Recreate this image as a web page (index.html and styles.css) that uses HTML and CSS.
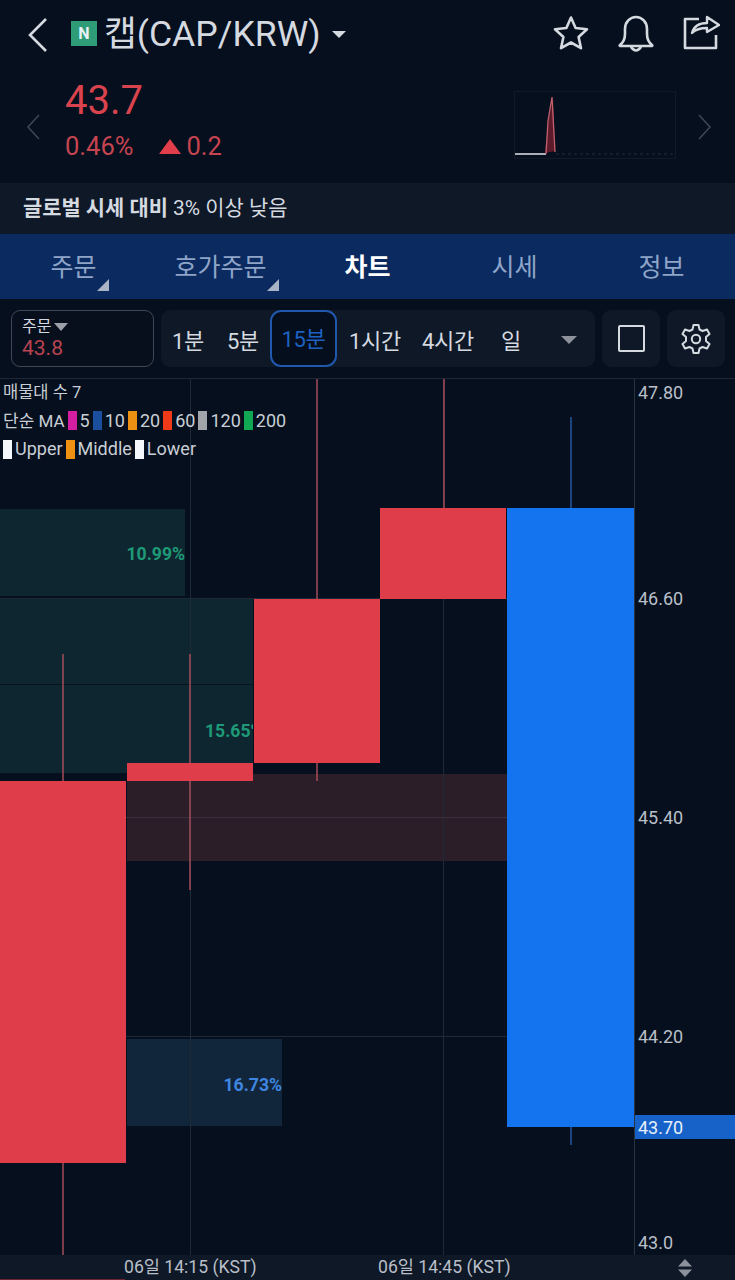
FILE: index.html
```html
<!DOCTYPE html>
<html lang="ko">
<head>
<meta charset="utf-8">
<title>캡(CAP/KRW)</title>
<link rel="stylesheet" href="styles.css">
</head>
<body>
<div class="app">
  <header class="topbar">
    <svg class="back" width="24" height="36" viewBox="0 0 24 36"><path d="M20 2 L4 18 L20 34" fill="none" stroke="#d5d9e0" stroke-width="2.6"/></svg>
    <span class="nbadge">N</span>
    <span class="coin">캡(CAP/KRW)</span>
    <span class="caret"></span>
    <span class="spacer"></span>
    <svg class="ico" width="38" height="38" viewBox="0 0 38 38"><path d="M19 3.5 L23.6 14 L35 15.2 L26.6 23 L29 34.2 L19 28.5 L9 34.2 L11.400 23 L3 15.2 L14.400 14 Z" fill="none" stroke="#d5d9e0" stroke-width="2.6" stroke-linejoin="round"/></svg>
    <svg class="ico" width="38" height="38" viewBox="0 0 38 38"><path d="M3 31 Q8 27 8 20 V15 C8 8 13 3 19 3 C25 3 30 8 30 15 V20 Q30 27 35 31 Q36 32 34 32 H4 Q2 32 3 31 Z M14 33 Q19 40 24 33" fill="none" stroke="#d5d9e0" stroke-width="2.6" stroke-linejoin="round"/></svg>
    <svg class="ico" width="38" height="38" viewBox="0 0 38 38"><path d="M17 5 H3 V34 H34 V21" fill="none" stroke="#d5d9e0" stroke-width="2.6" stroke-linejoin="round"/><path d="M10 19 C12 12 18 9 25 9 V3 L37 11 L25 18 V14 C18 14 14 15 10 19 Z" fill="none" stroke="#d5d9e0" stroke-width="2.4" stroke-linejoin="round"/></svg>
  </header>

  <section class="price">
    <svg class="side" width="14" height="26" viewBox="0 0 14 26"><path d="M13 1 L2 13 L13 25" fill="none" stroke="#3c4755" stroke-width="1.6"/></svg>
    <div class="price-text">
      <div class="now">43.7</div>
      <div class="delta"><span>0.46%</span><span class="diff"><i class="up"></i>0.2</span></div>
    </div>
    <span class="spacer"></span>
    <svg class="spark" width="162" height="69" viewBox="0 0 162 69">
      <rect x="0.500" y="0.500" width="161" height="67" fill="none" stroke="#1e2835" stroke-dasharray="1 1"/>
      <path d="M31 62 L35 28 L39 6 L41 60" fill="#5c1a2a"/>
      <path d="M1 63 H32" stroke="#d5d9e0" stroke-width="1.6" fill="none"/>
      <path d="M32 63 L34 30 L38 6 L41 61" stroke="#c4606e" stroke-width="1.3" fill="none"/>
      <path d="M42 63 H160" stroke="#202b38" stroke-dasharray="3 3" fill="none"/>
    </svg>
    <svg class="side right" width="14" height="26" viewBox="0 0 14 26"><path d="M1 1 L12 13 L1 25" fill="none" stroke="#3c4755" stroke-width="1.6"/></svg>
  </section>

  <div class="notice"><b>글로벌 시세 대비</b> 3% 이상 낮음</div>

  <nav class="tabs">
    <a class="tab mark">주문</a>
    <a class="tab mark wide">호가주문</a>
    <a class="tab active">차트</a>
    <a class="tab">시세</a>
    <a class="tab">정보</a>
  </nav>

  <div class="tools">
    <div class="order">
      <div class="order-l">주문<i class="dn"></i></div>
      <div class="order-p">43.8</div>
    </div>
    <div class="periods">
      <span class="p">1분</span>
      <span class="p">5분</span>
      <span class="p sel">15분</span>
      <span class="p">1시간</span>
      <span class="p">4시간</span>
      <span class="p">일</span>
      <i class="more"></i>
    </div>
    <div class="tbtn"><span class="square"></span></div>
    <div class="tbtn">
      <svg width="32" height="32" viewBox="0 0 32 32"><path d="M13.500 2 H18.500 L19.500 6.500 L22.500 8 L27 6.500 L29.500 11 L26 14 V18 L29.500 21 L27 25.500 L22.500 24 L19.500 25.500 L18.500 30 H13.500 L12.500 25.500 L9.500 24 L5 25.500 L2.500 21 L6 18 V14 L2.500 11 L5 6.500 L9.500 8 L12.500 6.500 Z" fill="none" stroke="#d5d9e0" stroke-width="2" stroke-linejoin="round"/><circle cx="16" cy="16" r="4.200" fill="none" stroke="#d5d9e0" stroke-width="2"/></svg>
    </div>
  </div>

  <main class="chart">
    <svg class="plot" width="735" height="876" viewBox="0 379 735 876">
      <!-- volume profile zones -->
      <rect x="0" y="509" width="185" height="87" fill="#0e262f"/>
      <rect x="0" y="598" width="253" height="175" fill="#0e262f"/>
      <rect x="127" y="774" width="380" height="87" fill="#2b1e29"/>
      <rect x="127" y="1039" width="155" height="87" fill="#11253b"/>
      <!-- grid -->
      <g stroke="#1e2a38" stroke-width="1">
        <path d="M190.500 379 V1255"/>
        <path d="M443.500 379 V1255"/>
        <path d="M0 598.500 H634"/>
        <path d="M0 817.500 H634" stroke="#3a2f3a"/>
        <path d="M0 1036.500 H634"/>
        <path d="M634.500 379 V1255" stroke="#2a3441"/>
      </g>
      <path d="M0 684.500 H253" stroke="#06141d"/>
      <!-- wicks -->
      <g stroke="#b0505e" stroke-width="1.400">
        <path d="M63 654 V781"/>
        <path d="M63 1163 V1255"/>
        <path d="M190 654 V890"/>
        <path d="M317 379 V781"/>
        <path d="M444 379 V509"/>
      </g>
      <path d="M571 417 V509 M571 1126 V1145" stroke="#2a5cab" stroke-width="1.400"/>
      <!-- bodies -->
      <rect x="0" y="781" width="126" height="382" fill="#df3d49"/>
      <rect x="127" y="763" width="126" height="18" fill="#df3d49"/>
      <rect x="254" y="599" width="126" height="164" fill="#df3d49"/>
      <rect x="380" y="508" width="126" height="91" fill="#df3d49"/>
      <rect x="507" y="508" width="127" height="619" fill="#1473ee"/>
    </svg>

    <div class="legend">
      <div class="ltitle">매물대 수 7</div>
      <div class="lrow"><span class="lname">단순 MA</span><i class="sw c1"></i>5<i class="sw c2"></i>10<i class="sw c3"></i>20<i class="sw c4"></i>60<i class="sw c5"></i>120<i class="sw c6"></i>200</div>
      <div class="lrow"><i class="sw c7 first"></i>Upper<i class="sw c3"></i>Middle<i class="sw c7"></i>Lower</div>
    </div>

    <span class="pct g p1">10.99%</span>
    <span class="pct g p2">15.65%</span>
    <span class="pct b p3">16.73%</span>

    <span class="axis a1">47.80</span>
    <span class="axis a2">46.60</span>
    <span class="axis a3">45.40</span>
    <span class="axis a4">44.20</span>
    <span class="axis a5">43.0</span>
    <span class="last">43.70</span>
  </main>

  <footer class="time">
    <span class="t t1">06일 14:15 (KST)</span>
    <span class="t t2">06일 14:45 (KST)</span>
    <svg class="updown" width="14" height="20" viewBox="0 0 14 20"><path d="M7 1 L14 8.500 H0 Z M0 11.500 H14 L7 19 Z" fill="#8b929c"/></svg>
  </footer>
</div>
</body>
</html>
```

FILE: styles.css
```css
* { box-sizing: border-box; }
html, body { margin: 0; padding: 0; background: #050f1d; }
body { font-family: Roboto, "Noto Sans CJK KR", sans-serif; color: #d5d9e0; }
.app { width: 735px; height: 1280px; overflow: hidden; display: flex; flex-direction: column; }
.spacer { flex: 1; }

.topbar { height: 70px; display: flex; align-items: center; padding: 0 15px 0 26px; flex: none; }
.nbadge { width: 26px; height: 25px; margin: -3px 0 0 21px; background: #2f9c78; color: #e8f2f6; font-size: 16px; font-weight: 700; line-height: 25px; text-align: center; }
.coin { font-size: 35.600px; margin: -2px 0 0 7px; color: #d5d9e0; line-height: 40px; white-space: nowrap; }
.caret { width: 0; height: 0; margin: -2px 0 0 11px; border-left: 7.500px solid transparent; border-right: 7.500px solid transparent; border-top: 7.500px solid #d5d9e0; }
.ico { margin-left: 27px; flex: none; margin-top: -4px; }
.ico:first-of-type { margin-left: 0; }

.price { height: 113px; display: flex; align-items: center; padding: 0 23px 0 26px; flex: none; }
.side { flex: none; margin-top: 1px; }
.side.right { margin-left: 22px; }
.price-text { margin: 9px 0 0 25px; align-self: flex-start; }
.now { font-size: 40px; line-height: 44px; color: #d8434e; }
.delta { display: flex; font-size: 25.500px; line-height: 32px; margin-top: 7px; color: #c64450; }
.diff { margin-left: 26px; display: flex; align-items: center; }
.up { width: 0; height: 0; margin-right: 5px; border-left: 11.500px solid transparent; border-right: 11.500px solid transparent; border-bottom: 15px solid #e03e4a; }
.spark { flex: none; margin-top: -3px; }

.notice { height: 51px; background: #0e1826; padding-left: 23px; line-height: 51px; font-size: 20.900px; flex: none; color: #d5d9e0; }
.notice b { font-weight: 700; }

.tabs { height: 65px; background: #0a2a60; display: flex; flex: none; }
.tab { position: relative; flex: none; width: 147px; line-height: 68px; text-align: center; font-size: 25px; color: #8fa5c8; }
.tab.active { color: #fff; font-weight: 700; }
.mark::after { content: ""; position: absolute; left: 97px; top: 45px; width: 0; height: 0; border-left: 12px solid transparent; border-bottom: 12px solid #a9b4c6; }
.tab.mark.wide::after { left: 120px; }

.tools { height: 80px; display: flex; align-items: flex-start; padding: 11px 11px 0; gap: 7px; border-bottom: 1px solid #1e2733; flex: none; }
.order { width: 143px; height: 57px; border: 1.500px solid #3f4854; border-radius: 9px; padding: 6px 0 0 10px; flex: none; background: #070f1d; }
.order-l { font-size: 16px; line-height: 19px; color: #d5d9e0; display: flex; align-items: center; }
.dn { display: inline-block; margin-left: 3px; width: 0; height: 0; border-left: 7.500px solid transparent; border-right: 7.500px solid transparent; border-top: 8px solid #9a9fa8; }
.order-p { font-size: 21px; line-height: 24px; color: #b84450; }
.periods { width: 434px; height: 57px; background: #0e1826; border-radius: 9px; display: flex; align-items: center; position: relative; padding-left: 11px; flex: none; }
.p { font-size: 22px; color: #d5d9e0; margin-right: 23px; white-space: nowrap; letter-spacing: -0.3px; }
.p.sel { width: 67px; height: 57px; margin: 0 12px 0 -12px; border: 2px solid #1f58ad; border-radius: 11px; line-height: 55px; text-align: center; color: #1d62c2; background: #050e1c; }
.p:nth-child(4) { margin-right: 21px; }
.p:nth-child(5) { margin-right: 27px; }
.more { position: absolute; left: 400px; top: 26px; width: 0; height: 0; border-left: 8px solid transparent; border-right: 8px solid transparent; border-top: 8px solid #8d929a; }
.tbtn { width: 58px; height: 57px; background: #0e1826; border-radius: 9px; display: flex; align-items: center; justify-content: center; flex: none; }
.square { width: 27px; height: 27px; border: 2px solid #d5d9e0; border-radius: 2px; }

.chart { position: relative; height: 876px; flex: none; overflow: hidden; }
.plot { display: block; position: absolute; left: 0; top: 0; }
.legend { position: absolute; left: 3px; top: 0; font-size: 18px; color: #c9ced6; line-height: 28.500px; }
.ltitle { font-size: 16.500px; }
.lname { font-size: 17px; }
.lrow { display: flex; align-items: center; }
.lrow:nth-child(2) { margin-top: -1px; }
.sw { width: 9px; height: 19px; margin: 0 3px; flex: none; }
.sw.first { margin-left: 0; }
.c1 { background: #d31ea2; }
.c2 { background: #1a4f9e; }
.c3 { background: #ee9112; }
.c4 { background: #ef3a1a; }
.c5 { background: #a1a4a9; }
.c6 { background: #10a853; }
.c7 { background: #f4f8fc; }

.pct { position: absolute; font-size: 17.600px; font-weight: 700; line-height: 20px; }
.g { color: #1f9a78; }
.b { color: #3f86e0; }
.p1 { right: 550px; top: 165px; }
.p2 { left: 205px; top: 342px; width: 48px; overflow: hidden; white-space: nowrap; }
.p3 { right: 453px; top: 696px; }

.axis { position: absolute; left: 638px; font-size: 18px; line-height: 22px; color: #b9bfc8; }
.a1 { top: 3px; }
.a2 { top: 209px; }
.a3 { top: 428px; }
.a4 { top: 647px; }
.a5 { top: 853px; }
.last { position: absolute; left: 635px; top: 736px; width: 100px; height: 24px; padding-left: 3px; background: #1762c9; color: #e6f0fb; font-size: 18px; line-height: 25px; }

.time { position: relative; height: 25px; background: #0e1826; flex: none; }
.time::after { content: ""; position: absolute; left: 0; bottom: 0; width: 125px; height: 1px; background: #6a2432; }
.t { position: absolute; top: 0; font-size: 17.600px; line-height: 25px; color: #b9bfc8; white-space: nowrap; }
.t1 { left: 124px; }
.t2 { left: 378px; }
.updown { position: absolute; left: 678px; top: 3px; }
```
